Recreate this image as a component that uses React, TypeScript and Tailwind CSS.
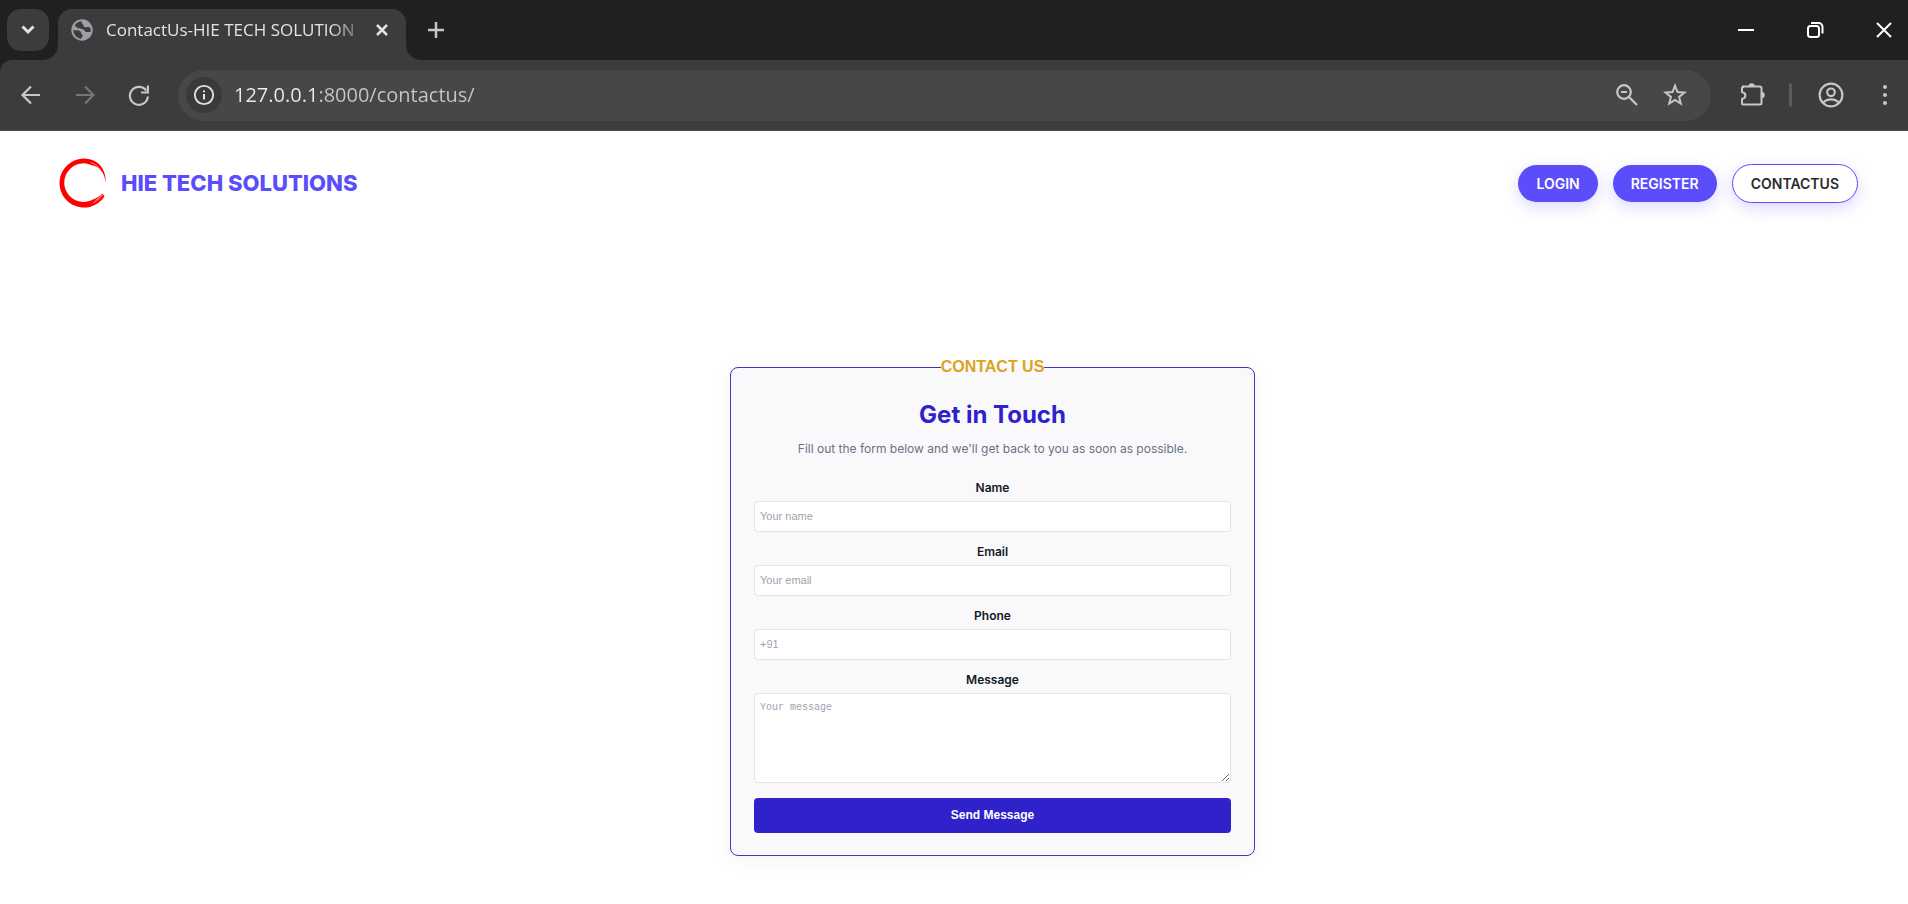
import React from "react";

type IconProps = { children: React.ReactNode; size?: string; view?: string; width?: number };

function Icon({ children, size = "size-6", view = "0 0 24 24", width = 2 }: IconProps) {
  return (
    <svg aria-hidden="true" viewBox={view} className={`${size} shrink-0`} fill="none" stroke="currentColor" strokeWidth={width}>
      {children}
    </svg>
  );
}

function TabStrip() {
  return (
    <div className="flex h-[60px] items-end bg-[#1f2120] pl-[7px] text-[#e3e3e3]">
      <button aria-label="Search tabs" className="mb-[9px] grid size-[42px] shrink-0 place-items-center rounded-[14px] bg-[#3c3c3c]">
        <Icon width={3}><path d="M6.5 8.5l5.5 5.5 5.5-5.5" /></Icon>
      </button>
      <div className="relative ml-[9px] flex h-[51px] w-[348px] items-center rounded-t-[14px] bg-[#3c3c3c] pr-3 pb-[9px] pl-[13px]">
        <svg aria-hidden="true" viewBox="0 0 15 15" className="absolute bottom-0 -left-[15px] size-[15px]"><path d="M15 0v15H0A15 15 0 0 0 15 0z" fill="#3c3c3c" /></svg>
        <svg aria-hidden="true" viewBox="0 0 15 15" className="absolute -right-[15px] bottom-0 size-[15px]"><path d="M0 0v15h15A15 15 0 0 1 0 0z" fill="#3c3c3c" /></svg>
        <svg aria-hidden="true" viewBox="0 0 22 22" className="size-[22px] shrink-0">
          <circle cx="11" cy="11" r="10.7" fill="#9aa0a6" />
          <path d="M11.500 2.200C10.500 4 12 5 11 6.200 10 7.200 8.500 6.800 8.500 8.200c0 1.500 2.500.8 4 1 1.800.3 1.500 2.300 3.500 2.600 1.500.2 2.500-.3 3.700-.8A8.700 8.700 0 0 1 16 18c-.5-1.500-1.500-1.800-3-2-.3-2-1-3.800-3.500-4.300C7 11.300 5 11.500 2.300 11A8.700 8.700 0 0 0 9.500 19.600c.3-1.800 2.500-2 2.500-4" fill="none" />
          <path d="M11 2.300C8 2.300 5 4 3.600 6.700 5 7 5.500 8.500 7 9.200c2 .9 4.500.2 6 1.600 1 1 .8 2.200 2.500 2.200h4C20.500 9 18.500 7.500 17 8c-2 .7-4.500.5-4.500-1.500S9.500 4.800 11 2.300zM2.300 11c2 .5 5-.3 7 1.200 1.500 1.200.2 2.500 2 3.500 1.500.8-.3 2-1.300 4C5.800 19.300 2.300 15.500 2.300 11z" fill="#3c3c3c" />
        </svg>
        <span className="ml-[13px] min-w-0 flex-1 whitespace-nowrap font-['Open_Sans',sans-serif] text-[17px] leading-6 [mask-image:linear-gradient(to_right,black_85%,transparent)]">
          ContactUs-HIE TECH SOLUTION
        </span>
        <button aria-label="Close tab" className="grid size-6 shrink-0 place-items-center">
          <Icon size="size-[20px]" width={3}><path d="M6 6l12 12M18 6L6 18" /></Icon>
        </button>
      </div>
      <button aria-label="New tab" className="mb-[18px] ml-[18px] grid size-6 place-items-center text-[#c7c7c7]">
        <Icon width={2.5}><path d="M12 4v16M4 12h16" /></Icon>
      </button>
      <div className="mb-[18px] ml-auto mr-3 flex items-center gap-[45px] text-white">
        <button aria-label="Minimize"><Icon><path d="M4 12h16" /></Icon></button>
        <button aria-label="Restore">
          <Icon>
            <rect x="5" y="8" width="11" height="11" rx="2.500" />
            <path d="M8 5h7.500a4 4 0 0 1 4 4v6.500" />
          </Icon>
        </button>
        <button aria-label="Close"><Icon><path d="M5 5l14 14M19 5L5 19" /></Icon></button>
      </div>
    </div>
  );
}

function Toolbar() {
  return (
    <div className="bg-[#1f2120]">
      <div className="flex h-[71px] items-center rounded-tl-xl border-b border-[#4a4a4a] bg-[#3c3c3c] pr-[11px] pl-[19px] text-[#c7c7c7]">
        <button aria-label="Back"><Icon width={2.200}><path d="M21 12H4M12 3.500L3.500 12l8.500 8.500" /></Icon></button>
        <button aria-label="Forward" className="ml-[30px] text-[#757575]"><Icon width={2.200}><path d="M3 12h17M12 3.500l8.500 8.500-8.500 8.500" /></Icon></button>
        <button aria-label="Reload" className="ml-[30px]">
          <Icon width={2.200}>
            <path d="M19.200 7.500A9 9 0 1 0 20.900 13.500" />
            <path d="M20.900 2.500v7H14" />
          </Icon>
        </button>
        <div className="ml-[27px] flex h-[51px] flex-1 items-center rounded-full bg-[#474747] pr-6 pl-2">
          <button aria-label="View site information" className="grid size-9 shrink-0 place-items-center rounded-full bg-[#3a3a3a] text-[#e3e3e3]">
            <Icon size="size-[22px]">
              <circle cx="12" cy="12" r="10" />
              <path d="M12 11v6M12 7v2" strokeWidth="2.200" />
            </Icon>
          </button>
          <input
            aria-label="Address"
            defaultValue="127.0.0.1:8000/contactus/"
            className="ml-3 min-w-0 flex-1 bg-[linear-gradient(to_right,#ececec_82px,#c7c7c7_82px)] bg-clip-text font-['Open_Sans',sans-serif] text-[20px] leading-7 text-transparent outline-none"
          />
          <button aria-label="Zoom">
            <Icon width={2.200}>
              <circle cx="9" cy="9" r="6.800" />
              <path d="M14 14l8 8M6 9h6" />
            </Icon>
          </button>
          <button aria-label="Bookmark this tab" className="ml-6">
            <Icon><path d="M12 2.700l2.500 6.300 6.900.5-5.300 4.400 1.700 6.700L12 17l-5.800 3.600 1.700-6.700-5.300-4.400 6.900-.5z" /></Icon>
          </button>
        </div>
        <button aria-label="Extensions" className="ml-7">
          <Icon size="size-[26px]" view="0 0 26 26">
            <path d="M4 4.500h17a1.500 1.500 0 0 1 1.500 1.500v15a1.500 1.500 0 0 1-1.500 1.500H4a1 1 0 0 1-1-1v-4.500c4.500-1 4.500-6 0-7v-4a1 1 0 0 1 1-1z" />
            <path d="M9.500 4.500a3.200 3.200 0 0 1 6.400 0zM22.500 9.800a3.200 3.200 0 0 1 0 6.400z" fill="currentColor" stroke="none" />
          </Icon>
        </button>
        <div className="ml-6 h-6 w-[3px] rounded bg-[#5c5c5c]" />
        <button aria-label="Profile" className="ml-[26px]">
          <Icon size="size-[26px]">
            <circle cx="12" cy="12" r="10.500" />
            <circle cx="12" cy="9.500" r="3.500" />
            <path d="M4.500 19.200c4-4.300 11-4.300 15 0" />
          </Icon>
        </button>
        <button aria-label="Menu" className="ml-[29px]">
          <Icon><path d="M12 2a2 2 0 1 1 0 4 2 2 0 0 1 0-4zM12 10a2 2 0 1 1 0 4 2 2 0 0 1 0-4zM12 18a2 2 0 1 1 0 4 2 2 0 0 1 0-4z" fill="currentColor" stroke="none" /></Icon>
        </button>
      </div>
    </div>
  );
}

function Logo() {
  return (
    <svg aria-hidden="true" viewBox="0 0 50 50" className="size-[50px]" fill="none">
      <path d="M45.500 38.500A24.500 24.500 0 1 1 34 2.300C42 5.500 47 14 46.800 24 44.500 14.500 41 9 33 7.300A19.300 19.300 0 1 0 34 41.500C38 40 41 38 43.500 35.500z" fill="#f00" />
      <path d="M32 4.500C39 7.500 44 13 46 22M34 45c4-2 7-4.500 9.500-8M36 42.500c2.500-1.500 5-3.500 7-6" stroke="#fff" strokeWidth="0.500" />
    </svg>
  );
}

function Header() {
  const pill = "rounded-full px-[18px] py-2 text-sm leading-[21px] font-semibold shadow-[0_5px_15px_rgba(91,78,250,0.22)]";
  return (
    <header className="flex items-center justify-between pt-[27px] pr-[50px] pl-[59px] font-['Inter',sans-serif]">
      <a href="/" className="flex items-center gap-3 text-[22px] leading-7 font-extrabold text-[#5b4efa]">
        <Logo />
        HIE TECH SOLUTIONS
      </a>
      <nav className="flex items-center gap-[15px]">
        <a href="/login" className={`${pill} bg-[#5b4efa] text-white`}>LOGIN</a>
        <a href="/register" className={`${pill} bg-[#5b4efa] text-white`}>REGISTER</a>
        <a href="/contactus" className={`${pill} border border-[#5b4efa] bg-white text-[#2b2b2b]`}>CONTACTUS</a>
      </nav>
    </header>
  );
}

const box = "w-full rounded border border-[#e3e3e8] bg-white px-[5px] text-[#111827] placeholder:text-[#9ca3af]";
const labelStyle = "mb-[5px] block text-xs leading-4 font-semibold text-[#111827]";

function Field({ id, label, type, placeholder }: { id: string; label: string; type: string; placeholder: string }) {
  return (
    <>
      <label htmlFor={id} className={labelStyle}>{label}</label>
      <input id={id} type={type} placeholder={placeholder} className={`${box} mb-3 h-[31px] pb-[2px] font-['Liberation_Sans',Arial,sans-serif] text-[11px]`} />
    </>
  );
}

function ContactForm() {
  return (
    <form className="mx-auto w-[525px] max-w-full" onSubmit={(e) => e.preventDefault()}>
      <fieldset className="rounded-lg border border-[#4a32c0] bg-[#f9f9fc] px-[23px] pb-[22px] text-center font-['Inter',sans-serif] shadow-[0_4px_20px_rgba(0,0,0,0.05)]">
        <legend className="mx-auto font-['Liberation_Sans',Arial,sans-serif] text-base leading-5 font-bold text-[#daa520]">CONTACT US</legend>
        <h1 className="mt-[22px] text-2xl leading-8 font-bold text-[#3022cb]">Get in Touch</h1>
        <p className="mt-2 mb-[21px] text-xs leading-5 text-[#6b7280]">Fill out the form below and we'll get back to you as soon as possible.</p>
        <Field id="name" label="Name" type="text" placeholder="Your name" />
        <Field id="email" label="Email" type="email" placeholder="Your email" />
        <Field id="phone" label="Phone" type="tel" placeholder="+91" />
        <label htmlFor="message" className={labelStyle}>Message</label>
        <textarea id="message" placeholder="Your message" className={`${box} block h-[90px] resize-y py-[6px] font-['Liberation_Mono',monospace] text-[10px]`} />
        <button type="submit" className="mt-[15px] block h-[35px] w-full rounded bg-[#3022cb] pb-[2px] font-['Liberation_Sans',Arial,sans-serif] text-xs font-bold text-white">Send Message</button>
      </fieldset>
    </form>
  );
}

export default function App() {
  return (
    <div className="min-h-screen bg-white">
      <TabStrip />
      <Toolbar />
      <Header />
      <main className="pt-[149px] pb-10 pl-[77px]">
        <ContactForm />
      </main>
    </div>
  );
}
